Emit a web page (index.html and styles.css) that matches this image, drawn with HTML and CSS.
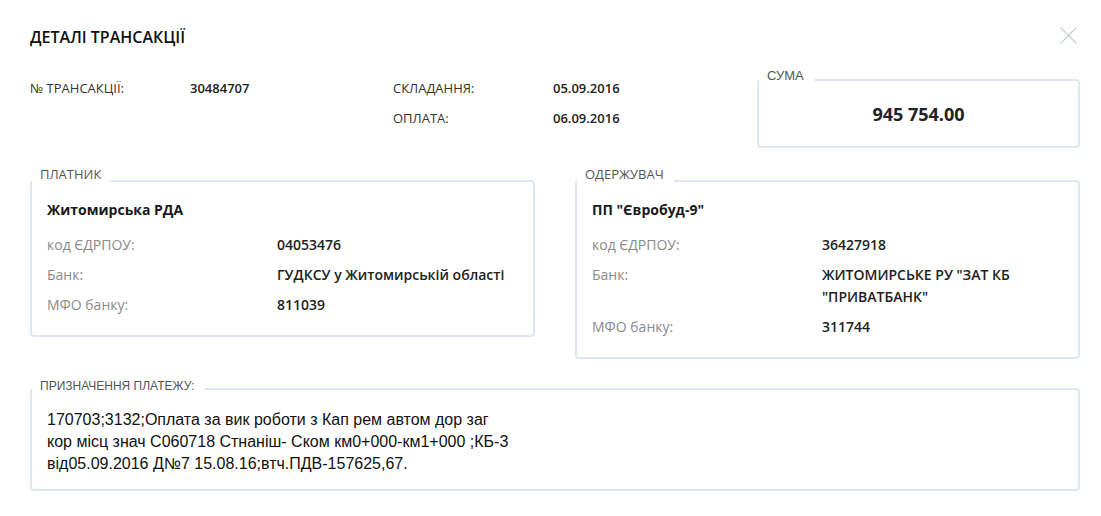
FILE: index.html
```html
<!DOCTYPE html>
<html lang="uk">
<head>
<meta charset="utf-8">
<title>Деталі трансакції</title>
<link rel="stylesheet" href="styles.css">
</head>
<body>
<div class="modal">
  <div class="header">
    <h1 class="title">ДЕТАЛІ ТРАНСАКЦІЇ</h1>
    <button class="close" aria-label="Закрити">
      <svg width="17" height="17" viewBox="0 0 17 17"><path d="M0.5 0.5L16.5 16.5M16.5 0.5L0.5 16.5" stroke="#c9ced6" stroke-width="1.2" fill="none"/></svg>
    </button>
  </div>

  <div class="top">
    <div class="info">
      <div class="lbl">№ ТРАНСАКЦІЇ:</div>
      <div class="val">30484707</div>
      <div class="lbl">СКЛАДАННЯ:</div>
      <div class="val">05.09.2016</div>
      <div></div>
      <div></div>
      <div class="lbl">ОПЛАТА:</div>
      <div class="val">06.09.2016</div>
    </div>
    <fieldset class="box sum">
      <legend class="legend legend-arial">СУМА</legend>
      <div class="sum-value">945 754.00</div>
    </fieldset>
  </div>

  <div class="parties">
    <fieldset class="box party">
      <legend class="legend">ПЛАТНИК</legend>
      <div class="party-body">
        <div class="name">Житомирська РДА</div>
        <div class="rows">
          <div class="k">код ЄДРПОУ:</div><div class="v">04053476</div>
          <div class="k">Банк:</div><div class="v">ГУДКСУ у Житомирській області</div>
          <div class="k">МФО банку:</div><div class="v">811039</div>
        </div>
      </div>
    </fieldset>
    <fieldset class="box party">
      <legend class="legend">ОДЕРЖУВАЧ</legend>
      <div class="party-body">
        <div class="name">ПП "Євробуд-9"</div>
        <div class="rows">
          <div class="k">код ЄДРПОУ:</div><div class="v">36427918</div>
          <div class="k">Банк:</div><div class="v">ЖИТОМИРСЬКЕ РУ "ЗАТ КБ<br>"ПРИВАТБАНК"</div>
          <div class="k">МФО банку:</div><div class="v">311744</div>
        </div>
      </div>
    </fieldset>
  </div>

  <fieldset class="box purpose">
    <legend class="legend legend-arial legend-small">ПРИЗНАЧЕННЯ ПЛАТЕЖУ:</legend>
    <div class="purpose-text">170703;3132;Оплата за вик роботи з Кап рем автом дор заг<br>кор місц знач С060718 Стнаніш- Ском км0+000-км1+000 ;КБ-3<br>від05.09.2016 Д№7 15.08.16;втч.ПДВ-157625,67.</div>
  </fieldset>
</div>
</body>
</html>
```

FILE: styles.css
```css
* { box-sizing: border-box; }

html, body {
  margin: 0;
  padding: 0;
  background: #ffffff;
}

body {
  font-family: "Open Sans", "Noto Sans", Arial, sans-serif;
  color: #222;
  font-size: 13px;
}

.modal {
  width: 1101px;
  padding: 26px 21px 0 30px;
}

.header {
  display: flex;
  justify-content: space-between;
  align-items: flex-start;
  height: 42px;
}

.title {
  margin: 0;
  font-size: 16px;
  line-height: 22px;
  font-weight: 600;
  color: #111;
}

.close {
  margin: 1px 3px 0 0;
  padding: 0;
  border: 0;
  background: none;
  width: 17px;
  height: 17px;
  display: block;
  cursor: pointer;
}
.close svg { display: block; }

.top {
  display: flex;
  justify-content: space-between;
  align-items: flex-start;
}

.info {
  display: grid;
  grid-template-columns: 160px 203px 160px 160px;
  padding-top: 5px;
  line-height: 30px;
  font-size: 13px;
}
.info .lbl { color: #333; }
.info .val { color: #222; font-weight: 600; }

.box {
  margin: 0;
  padding: 0;
  min-width: 0;
  border: 2px solid #dfe6f1;
  border-radius: 4px;
}

.legend {
  margin: 0;
  padding: 0 10px 14px 8px;
  font-size: 13px;
  line-height: 16px;
  color: #555;
  font-weight: 400;
}
.legend-arial {
  font-family: "Liberation Sans", Arial, sans-serif;
  padding-bottom: 8px;
}
.legend-small {
  font-size: 12px;
  line-height: 14px;
  padding-bottom: 6px;
}

.sum {
  width: 323px;
  padding: 10px 0 20px;
}
.sum-value {
  text-align: center;
  font-size: 18px;
  line-height: 24px;
  font-weight: 700;
  color: #222;
}

.parties {
  display: flex;
  gap: 40px;
  align-items: flex-start;
  margin-top: 18px;
}
.party { flex: 1 1 0; }

.party-body {
  padding: 3px 15px 19px;
}

.name {
  font-size: 14px;
  line-height: 22px;
  font-weight: 700;
  color: #1a1a1a;
  margin-bottom: 13px;
}

.rows {
  display: grid;
  grid-template-columns: 230px 1fr;
  row-gap: 8px;
  line-height: 22px;
  font-size: 14px;
}
.rows .k { color: #8a8a8a; }
.rows .v { color: #222; font-weight: 600; }

.purpose {
  margin-top: 20px;
}
.purpose-text {
  padding: 10px 15px 14px;
  font-family: "Liberation Sans", Arial, sans-serif;
  font-size: 16px;
  line-height: 22px;
  color: #111;
}
```
